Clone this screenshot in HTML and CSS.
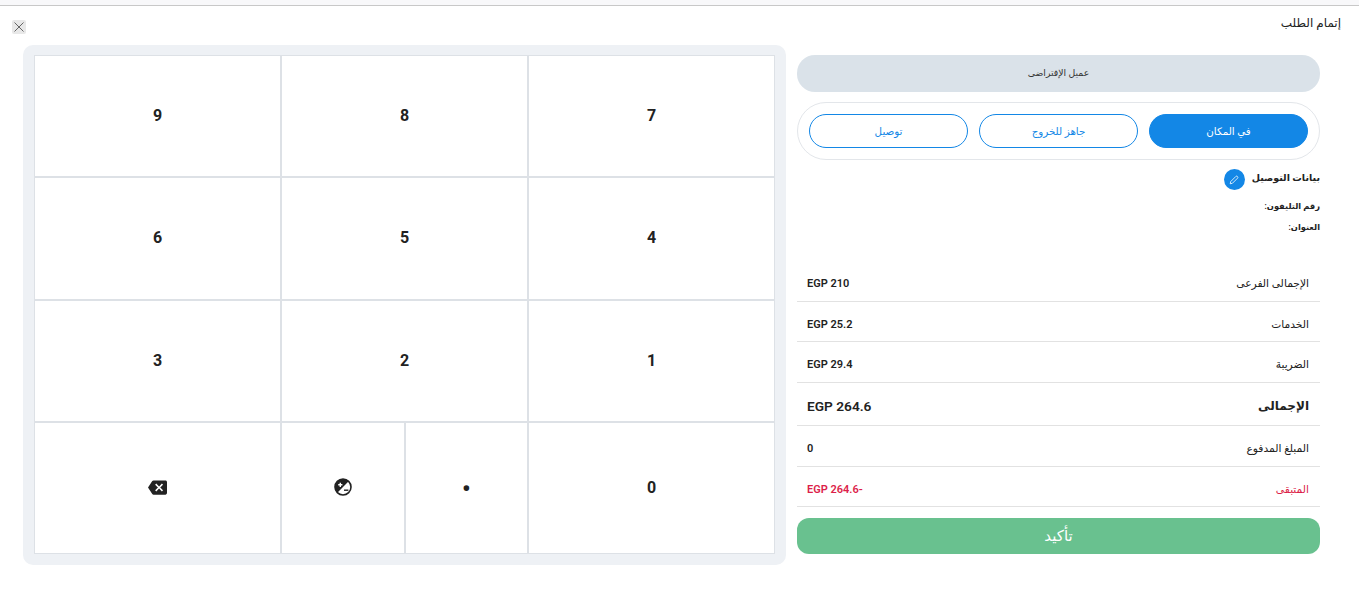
FILE: index.html
```html
<!DOCTYPE html>
<html lang="ar" dir="rtl">
<head>
    <meta charset="UTF-8">
    <meta name="viewport" content="width=device-width, initial-scale=1.0">
    <title>إتمام الطلب</title>
    <link rel="stylesheet" href="styles.css">
</head>
<body>

    <div class="top-strip"></div>

    <div class="modal">
        <header class="modal-header">
            <h1>إتمام الطلب</h1>
            <button class="close-btn" aria-label="close">
                <svg width="10" height="10" viewBox="0 0 10 10"><path d="M0.5 0.5L9.5 9.5M9.5 0.5L0.5 9.5" stroke="#666" stroke-width="1" fill="none"/></svg>
            </button>
        </header>

        <div class="modal-body">
            <section class="checkout">
                <button class="customer-btn">عميل الإفتراضى</button>

                <div class="order-types">
                    <button class="type-btn active">في المكان</button>
                    <button class="type-btn">جاهز للخروج</button>
                    <button class="type-btn">توصيل</button>
                </div>

                <div class="delivery-head">
                    <strong>بيانات التوصيل</strong>
                    <button class="edit-btn" aria-label="edit">
                        <svg width="10" height="10" viewBox="0 0 10 10"><path d="M1.2 8.8L1.7 6.6L6.9 1.4C7.3 1 7.9 1 8.3 1.4L8.6 1.7C9 2.1 9 2.7 8.6 3.1L3.4 8.3Z" stroke="#fff" stroke-width="0.8" fill="none"/></svg>
                    </button>
                </div>

                <p class="delivery-line">رقم التليفون:</p>
                <p class="delivery-line">العنوان:</p>

                <div class="totals">
                    <div class="total-row"><span>الإجمالى الفرعى</span><b>210 EGP</b></div>
                    <div class="total-row"><span>الخدمات</span><b>25.2 EGP</b></div>
                    <div class="total-row"><span>الضريبة</span><b>29.4 EGP</b></div>
                    <div class="total-row grand"><span>الإجمالى</span><b>264.6 EGP</b></div>
                    <div class="total-row paid"><span>المبلغ المدفوع</span><b>0</b></div>
                    <div class="total-row remaining"><span>المتبقى</span><b>-264.6 EGP</b></div>
                </div>

                <button class="confirm-btn">تأكيد</button>
            </section>

            <section class="keypad-wrap">
                <div class="keypad">
                    <button class="key">7</button>
                    <button class="key">8</button>
                    <button class="key">9</button>
                    <button class="key">4</button>
                    <button class="key">5</button>
                    <button class="key">6</button>
                    <button class="key">1</button>
                    <button class="key">2</button>
                    <button class="key">3</button>
                    <button class="key">0</button>
                    <div class="key-split">
                        <button class="key dot">•</button>
                        <button class="key" aria-label="plus minus">
                            <svg width="18" height="18" viewBox="0 0 18 18">
                                <circle cx="9" cy="9" r="8" fill="#fff" stroke="#222" stroke-width="1.6"/>
                                <path d="M3.3 3.3A8 8 0 0 1 14.7 3.3L3.3 14.7A8 8 0 0 1 3.3 3.3Z" fill="#222"/>
                                <path d="M4.2 6.8H8.4M6.3 4.7V8.9" stroke="#fff" stroke-width="1.4"/>
                                <path d="M10 12.2H14.4" stroke="#222" stroke-width="1.4"/>
                            </svg>
                        </button>
                    </div>
                    <button class="key" aria-label="backspace">
                        <svg width="19" height="15" viewBox="0 0 24 18"><path fill="#222" d="M22 0H7C6.310 0 5.770.35 5.410.88L0 9l5.410 8.110C5.770 17.640 6.310 18 7 18h15c1.100 0 2-.9 2-2V2c0-1.100-.9-2-2-2zm-3 12.590L17.590 14 14 10.410 10.410 14 9 12.590 12.590 9 9 5.410 10.410 4 14 7.590 17.590 4 19 5.410 15.410 9 19 12.590z"/></svg>
                    </button>
                </div>
            </section>
        </div>
    </div>

</body>
</html>
```

FILE: styles.css
```css
* {
    box-sizing: border-box;
}

body {
    margin: 0;
    font-family: 'Roboto', 'DejaVu Sans', sans-serif;
    background-color: #fff;
    color: #222;
    height: 599px;
    overflow: hidden;
}

button {
    font-family: inherit;
    cursor: pointer;
}

.top-strip {
    height: 6px;
    background-color: #f8f8fa;
    border-bottom: 1px solid #c8c8c8;
}

.modal-header {
    display: flex;
    justify-content: space-between;
    align-items: flex-start;
    height: 39px;
    padding: 10px 18px 0 12px;
}

.modal-header h1 {
    margin: 0;
    font-size: 12px;
    font-weight: 400;
    line-height: 15px;
}

.close-btn {
    width: 14px;
    height: 14px;
    margin-top: 4px;
    padding: 0;
    display: flex;
    align-items: center;
    justify-content: center;
    background-color: #e8e8e8;
    border: none;
    border-radius: 2px;
}

.modal-body {
    display: flex;
    gap: 11px;
    padding: 0 39px 0 23px;
}

/* right side */
.checkout {
    width: 523px;
    padding-top: 10px;
    flex-shrink: 0;
}

.customer-btn {
    display: block;
    width: 100%;
    height: 37px;
    padding: 0 0 2px;
    background-color: #dae2e9;
    border: none;
    border-radius: 18px;
    font-size: 9.3px;
    color: #333;
}

.order-types {
    display: flex;
    gap: 11px;
    height: 58px;
    margin-top: 10px;
    padding: 11px;
    border: 1px solid #e3e6ea;
    border-radius: 29px;
}

.type-btn {
    flex: 1;
    height: 34px;
    background-color: #fff;
    border: 1px solid #1387e6;
    border-radius: 17px;
    color: #1387e6;
    font-size: 10.3px;
}

.type-btn.active {
    background-color: #1387e6;
    color: #fff;
}

.delivery-head {
    display: flex;
    align-items: center;
    gap: 7px;
    height: 21px;
    margin-top: 9px;
    font-size: 9.5px;
}

.delivery-head strong {
    margin-bottom: 4px;
}

.edit-btn {
    width: 21px;
    height: 21px;
    padding: 0;
    display: flex;
    align-items: center;
    justify-content: center;
    background-color: #1387e6;
    border: none;
    border-radius: 50%;
}

.delivery-line {
    margin: 0;
    height: 21px;
    line-height: 21px;
    font-size: 8.3px;
    font-weight: 600;
}

.delivery-head + .delivery-line {
    margin-top: 6px;
}

.totals {
    margin-top: 23px;
}

.total-row {
    display: flex;
    justify-content: space-between;
    align-items: center;
    height: 40.5px;
    padding: 6px 11px 0 10px;
    border-bottom: 1px solid #e2e2e2;
    font-size: 10.7px;
}

.total-row b {
    font-size: 11px;
    font-weight: 600;
}

.total-row.grand {
    height: 43px;
    padding-top: 4px;
    font-size: 12px;
    font-weight: 700;
}

.total-row.grand b {
    font-size: 13.7px;
}

.total-row.paid {
    height: 41px;
}

.total-row.remaining {
    height: 40px;
    color: #dc1f4a;
}

.confirm-btn {
    display: block;
    width: 100%;
    height: 36px;
    margin-top: 11px;
    background-color: #69c18f;
    border: none;
    border-radius: 12px;
    color: #fff;
    font-size: 15px;
}

/* left side */
.keypad-wrap {
    width: 763px;
    height: 520px;
    padding: 10px 11px 11px;
    background-color: #eef1f5;
    border-radius: 10px;
}

.keypad {
    display: grid;
    grid-template-columns: repeat(3, 1fr);
    grid-template-rows: 122px 123px 122px 1fr;
    height: 499px;
    background-color: #fff;
}

.key {
    display: flex;
    align-items: center;
    justify-content: center;
    padding: 0 0 2px;
    background-color: #fff;
    border: 1px solid #dde1e6;
    border-radius: 0;
    color: #222;
    font-size: 16px;
    font-weight: 700;
}

.key.dot {
    padding: 2px 0 0;
    font-size: 24px;
}

.key-split {
    display: grid;
    grid-template-columns: 1fr 1fr;
}
```
